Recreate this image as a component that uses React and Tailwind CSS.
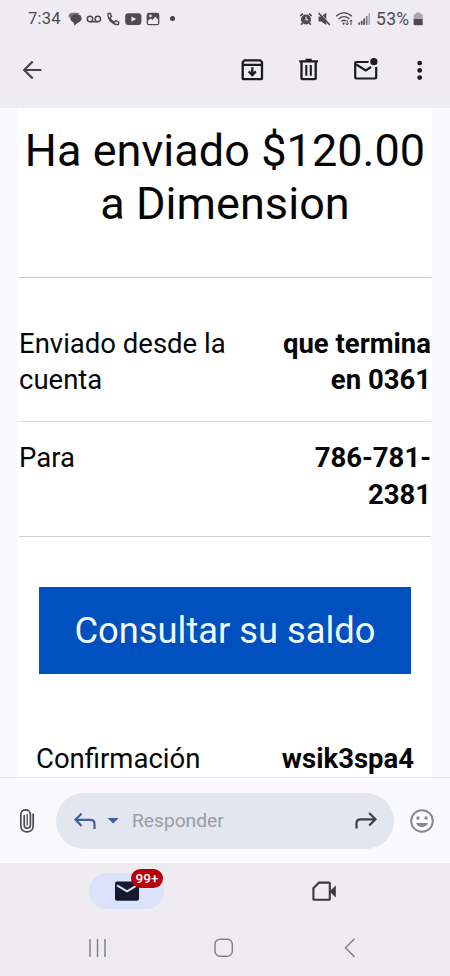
const Icon = ({ w, h, className = "", children }) => (
  <svg width={w} height={h} viewBox={`0 0 ${w} ${h}`} fill="none" className={`shrink-0 ${className}`}>
    {children}
  </svg>
);

const StatusBar = () => (
  <div className="flex h-[37px] items-center pl-7 text-[#4d4b50]">
    <span className="w-10 shrink-0 text-[16.5px] leading-5 tracking-[0.2px]">7:34</span>
    <Icon w={14} h={14}>
      <path d="M3.5 .8H8.5C10 .8 11 1.3 11.6 2.2C6 1.8 3 3 2.3 6.3L.3 4.2C.8 2.5 1.8 1.3 3.5 .8Z" fill="#77757a" />
      <ellipse cx="8" cy="6.4" rx="5.6" ry="4.5" fill="currentColor" />
      <path d="M5.5 9.5L6.3 13.6L10.5 10.2Z" fill="currentColor" />
    </Icon>
    <Icon w={16} h={14} className="ml-1">
      <circle cx="4" cy="7" r="2.7" stroke="currentColor" strokeWidth="1.5" />
      <circle cx="11.8" cy="7" r="2.7" stroke="currentColor" strokeWidth="1.5" />
      <path d="M4 9.7H11.8" stroke="currentColor" strokeWidth="1.5" />
    </Icon>
    <Icon w={14} h={14} className="ml-1">
      <path d="M2 1.8L4.3 1.3L5.5 4.5L3.9 6C5 8.2 6.2 9.2 8.2 10.2L9.6 8.7L12.8 10.1L12.4 12.6C7 13 1.5 7.5 2 1.8Z" stroke="currentColor" strokeWidth="1.4" strokeLinejoin="round" />
    </Icon>
    <Icon w={17} h={14} className="ml-[5px]">
      <rect x=".2" y="1.3" width="16.2" height="11.7" rx="3" fill="currentColor" />
      <path d="M6.5 4.5L11.2 7.1L6.5 9.7Z" fill="#eeecf1" />
    </Icon>
    <Icon w={14} h={14} className="ml-1">
      <rect x=".7" y=".7" width="12.6" height="12.6" rx="2.2" fill="currentColor" />
      <path d="M2 8.7L4.6 6.2L6.4 8L9.2 4.7L12 7.4V12H2Z" fill="#eeecf1" />
      <circle cx="4.4" cy="3.9" r="1.3" fill="#eeecf1" />
    </Icon>
    <span className="ml-[10px] size-[5px] shrink-0 rounded-full bg-[#454348]" />
    <Icon w={14} h={14} className="ml-[124px]">
      <circle cx="7" cy="7.5" r="5" fill="currentColor" />
      <path d="M1.3 4L4 1.7M12.7 4L10 1.7M3.5 11L2.2 12.8M10.5 11L11.8 12.8" stroke="currentColor" strokeWidth="1.7" />
      <path d="M7 4.8V7.7H9.3" stroke="#eeecf1" strokeWidth="1.1" />
    </Icon>
    <Icon w={15} h={14} className="ml-1">
      <path d="M1.5 4.5H4.2L9.3 .8V13L4.2 9.5H1.5Z" fill="currentColor" />
      <path d="M2.7 .8L13.5 12" stroke="#eeecf1" strokeWidth=".9" />
      <path d="M1.5 1L12.8 12.9" stroke="currentColor" strokeWidth="1.6" />
    </Icon>
    <Icon w={20} h={16} className="ml-[3px]">
      <path d="M1.3 5.2C5.5.8 12.5.8 16.7 5.2M3.7 7.9C6.7 4.9 11.3 4.9 14.3 7.9M6.2 10.5C7.9 8.9 9.6 8.9 11 10" stroke="currentColor" strokeWidth="1.4" />
      <path d="M8 12L9.2 13.4" stroke="currentColor" strokeWidth="2" />
      <path d="M12.2 9V14M10.9 12.5L12.2 14L13.5 12.5M16 14V9M14.7 10.5L16 9L17.3 10.5" stroke="currentColor" strokeWidth="1" />
    </Icon>
    <Icon w={13} h={14} className="ml-[3px]">
      <path d="M1.2 12.8V10.5M3.7 12.8V8.8M6.2 12.8V6.5" stroke="currentColor" strokeWidth="1.7" />
      <path d="M8.7 12.8V4" stroke="#77757a" strokeWidth="1.7" />
      <path d="M11.2 12.8V1.5" stroke="#aaa8ad" strokeWidth="1.7" />
    </Icon>
    <span className="ml-[5px] w-[36px] shrink-0 text-[17.5px] leading-5 tracking-[0.3px]">53%</span>
    <Icon w={11} h={14} className="ml-px">
      <path d="M3 .5H7.5V2H8.7L9.7 3V7H.6V3L1.6 2H3Z" fill="#aaa8ad" />
      <path d="M.6 7H9.7V12.2L8.7 13.2H1.6L.6 12.2Z" fill="currentColor" />
    </Icon>
  </div>
);

const Toolbar = () => (
  <div className="flex h-[71px] items-center pb-[5px] pl-[21px] text-[#1d1b22]">
    <Icon w={24} h={24} className="text-[#454349]">
      <path d="M20.4 12H3.5M11.7 3.5L3.2 12L11.7 20.5" stroke="currentColor" strokeWidth="2.2" />
    </Icon>
    <Icon w={24} h={24} className="ml-[195px]">
      <path d="M2.7 7.4V4.2L4.4 2.4H20.2L22 4.2V20.5Q22 21.1 21.4 21.1H3.3Q2.7 21.1 2.7 20.5V6.9H22" stroke="currentColor" strokeWidth="2.3" />
      <path d="M12.3 9.3V16.6M8.7 13.4L12.3 17L15.9 13.4" stroke="currentColor" strokeWidth="2.3" />
    </Icon>
    <Icon w={24} h={24} className="ml-[33px]">
      <path d="M2.2 3.3H21M8.5 2H14.7M4.5 3.5V20.3Q4.5 21.1 5.3 21.1H17.9Q18.7 21.1 18.7 20.3V3.5" stroke="currentColor" strokeWidth="2.3" />
      <path d="M9.3 6.9V17.7M13.8 6.9V17.7" stroke="currentColor" strokeWidth="2.1" />
    </Icon>
    <Icon w={26} h={24} className="ml-[32px]">
      <path d="M15.6 4H3.2Q2.2 4 2.2 5V19.5Q2.2 20.5 3.2 20.5H22.2Q23.2 20.5 23.2 19.5V8.9" stroke="currentColor" strokeWidth="2.2" />
      <path d="M2.9 6.2L12.7 12.5L18.1 9" stroke="currentColor" strokeWidth="2.2" />
      <circle cx="20.9" cy="3.7" r="3.6" fill="currentColor" />
    </Icon>
    <Icon w={8} h={24} className="ml-[36px]">
      <circle cx="4.7" cy="5.1" r="2.4" fill="currentColor" />
      <circle cx="4.7" cy="12.4" r="2.4" fill="currentColor" />
      <circle cx="4.7" cy="19.6" r="2.4" fill="currentColor" />
    </Icon>
  </div>
);

const Message = () => (
  <main className="h-[669px] overflow-hidden bg-[#faf9ff] px-[18px]">
    <div className="h-full bg-white px-px pt-4 text-[27.5px] leading-[36.5px] text-[#060606]">
      <h1 className="h-[153px] text-center text-[45px] leading-[53px] tracking-[0.05px] whitespace-nowrap">
        Ha enviado $120.00
        <br />a Dimension
      </h1>
      <div className="flex justify-between border-t border-b border-t-[#c8c8c8] border-b-[#dedede] pt-[47.5px] pb-[22.5px]">
        <p>
          Enviado desde la
          <br />
          cuenta
        </p>
        <p className="text-right font-bold">
          que termina
          <br />
          en 0361
        </p>
      </div>
      <div className="flex justify-between border-b border-[#d0d0d0] pt-[18px] pb-[23px]">
        <p>Para</p>
        <p className="text-right font-bold">
          786-781-
          <br />
          2381
        </p>
      </div>
      <button className="mx-5 mt-[50px] flex h-[87px] w-[372px] items-center justify-center bg-[#0050c0] pt-px text-[36.3px] leading-none text-[#f0faff]">
        Consultar su saldo
      </button>
      <div className="flex justify-between pt-[67px] pr-[17px] pl-[17px]">
        <p>Confirmación</p>
        <p className="font-bold">wsik3spa4</p>
      </div>
    </div>
  </main>
);

const ReplyBar = () => (
  <div className="flex h-[86px] items-center border-t border-[#e4e3e9] bg-[#faf9ff] pl-[19px]">
    <Icon w={16} h={26} className="text-[#4b494e]">
      <path d="M14.2 5.5V17.5C14.2 26 1.8 26 1.8 17.5V6.8C1.8.1 11.4.1 11.4 6.8V17.3C11.4 21.2 5.2 21.2 5.2 17.3V7" stroke="currentColor" strokeWidth="1.7" />
      <path d="M8.2 6V17.5" stroke="currentColor" strokeWidth="1.3" />
    </Icon>
    <div className="ml-[21px] flex h-14 w-[338px] items-center rounded-full bg-[#e3e6ef]">
      <Icon w={24} h={20} className="ml-[17px] text-[#41609f]">
        <path d="M8.6 2.5L2.5 8.8L8.6 15M2.8 8.8H17.5Q21.5 8.8 21.5 12.8V18" stroke="currentColor" strokeWidth="2.2" />
      </Icon>
      <Icon w={12} h={8} className="ml-[10px] text-[#41609f]">
        <path d="M.5 1H11.7L6.1 6.6Z" fill="currentColor" />
      </Icon>
      <span className="ml-[13px] text-[19.2px] leading-6 text-[#9b9ca4]">Responder</span>
      <Icon w={24} h={20} className="mr-[16px] ml-auto text-[#3e3f48]">
        <path d="M15.2 2L21.5 8.3L15.2 14.5M21 8.3H6.5Q2.5 8.3 2.5 12.3V17.5" stroke="currentColor" strokeWidth="2.2" />
      </Icon>
    </div>
    <Icon w={26} h={26} className="ml-[15px] text-[#89888d]">
      <circle cx="13" cy="13" r="10.8" stroke="currentColor" strokeWidth="2" />
      <circle cx="9" cy="10" r="1.7" fill="currentColor" />
      <circle cx="17" cy="10" r="1.7" fill="currentColor" />
      <path d="M7 15H19C17.5 20.5 8.5 20.5 7 15Z" fill="currentColor" />
    </Icon>
  </div>
);

const BottomNav = () => (
  <footer className="h-[113px] bg-[#eeecf1]">
    <div className="flex items-center pt-[10px] pl-[89px]">
      <div className="relative flex h-9 w-[75px] items-center justify-center rounded-full bg-[#dbe2f9]">
        <Icon w={24} h={20} className="text-[#161b2c]">
          <rect x="0" y=".5" width="24" height="19.3" rx="2" fill="currentColor" />
          <path d="M2 4.3L12 10.4L22 4.3" stroke="#dbe2f9" strokeWidth="2" />
        </Icon>
        <span className="absolute -top-1 left-[42px] flex h-[19px] w-8 items-center justify-center rounded-full bg-[#b80008] text-[13.5px] font-medium text-white">
          99+
        </span>
      </div>
      <Icon w={26} h={22} className="ml-[147px] text-[#3b393f]">
        <path d="M8 2.6H18Q18.8 2.6 18.8 3.4V19Q18.8 19.8 18 19.8H3.2Q2.4 19.8 2.4 19V8.2Z" stroke="currentColor" strokeWidth="2.1" />
        <path d="M18.5 11.5L24.8 5.6V17.4Z" fill="currentColor" />
      </Icon>
    </div>
    <div className="flex pt-[29px] pl-[88px] text-[#848287]">
      <Icon w={20} h={20}>
        <path d="M2 1V19M9.5 1V19M17 1V19" stroke="currentColor" strokeWidth="1.5" />
      </Icon>
      <Icon w={20} h={20} className="ml-[106px]">
        <rect x="1" y="1.3" width="17.3" height="17" rx="5" stroke="currentColor" strokeWidth="1.5" />
      </Icon>
      <Icon w={20} h={20} className="ml-[106px]">
        <path d="M14.5 .7L5.5 9.8L14.5 18.9" stroke="currentColor" strokeWidth="1.5" />
      </Icon>
    </div>
  </footer>
);

const App = () => (
  <div className="h-[976px] w-[450px] overflow-hidden font-['Roboto',sans-serif]">
    <header className="h-[108px] bg-[#eeecf1]">
      <StatusBar />
      <Toolbar />
    </header>
    <Message />
    <ReplyBar />
    <BottomNav />
  </div>
);

export default App;
